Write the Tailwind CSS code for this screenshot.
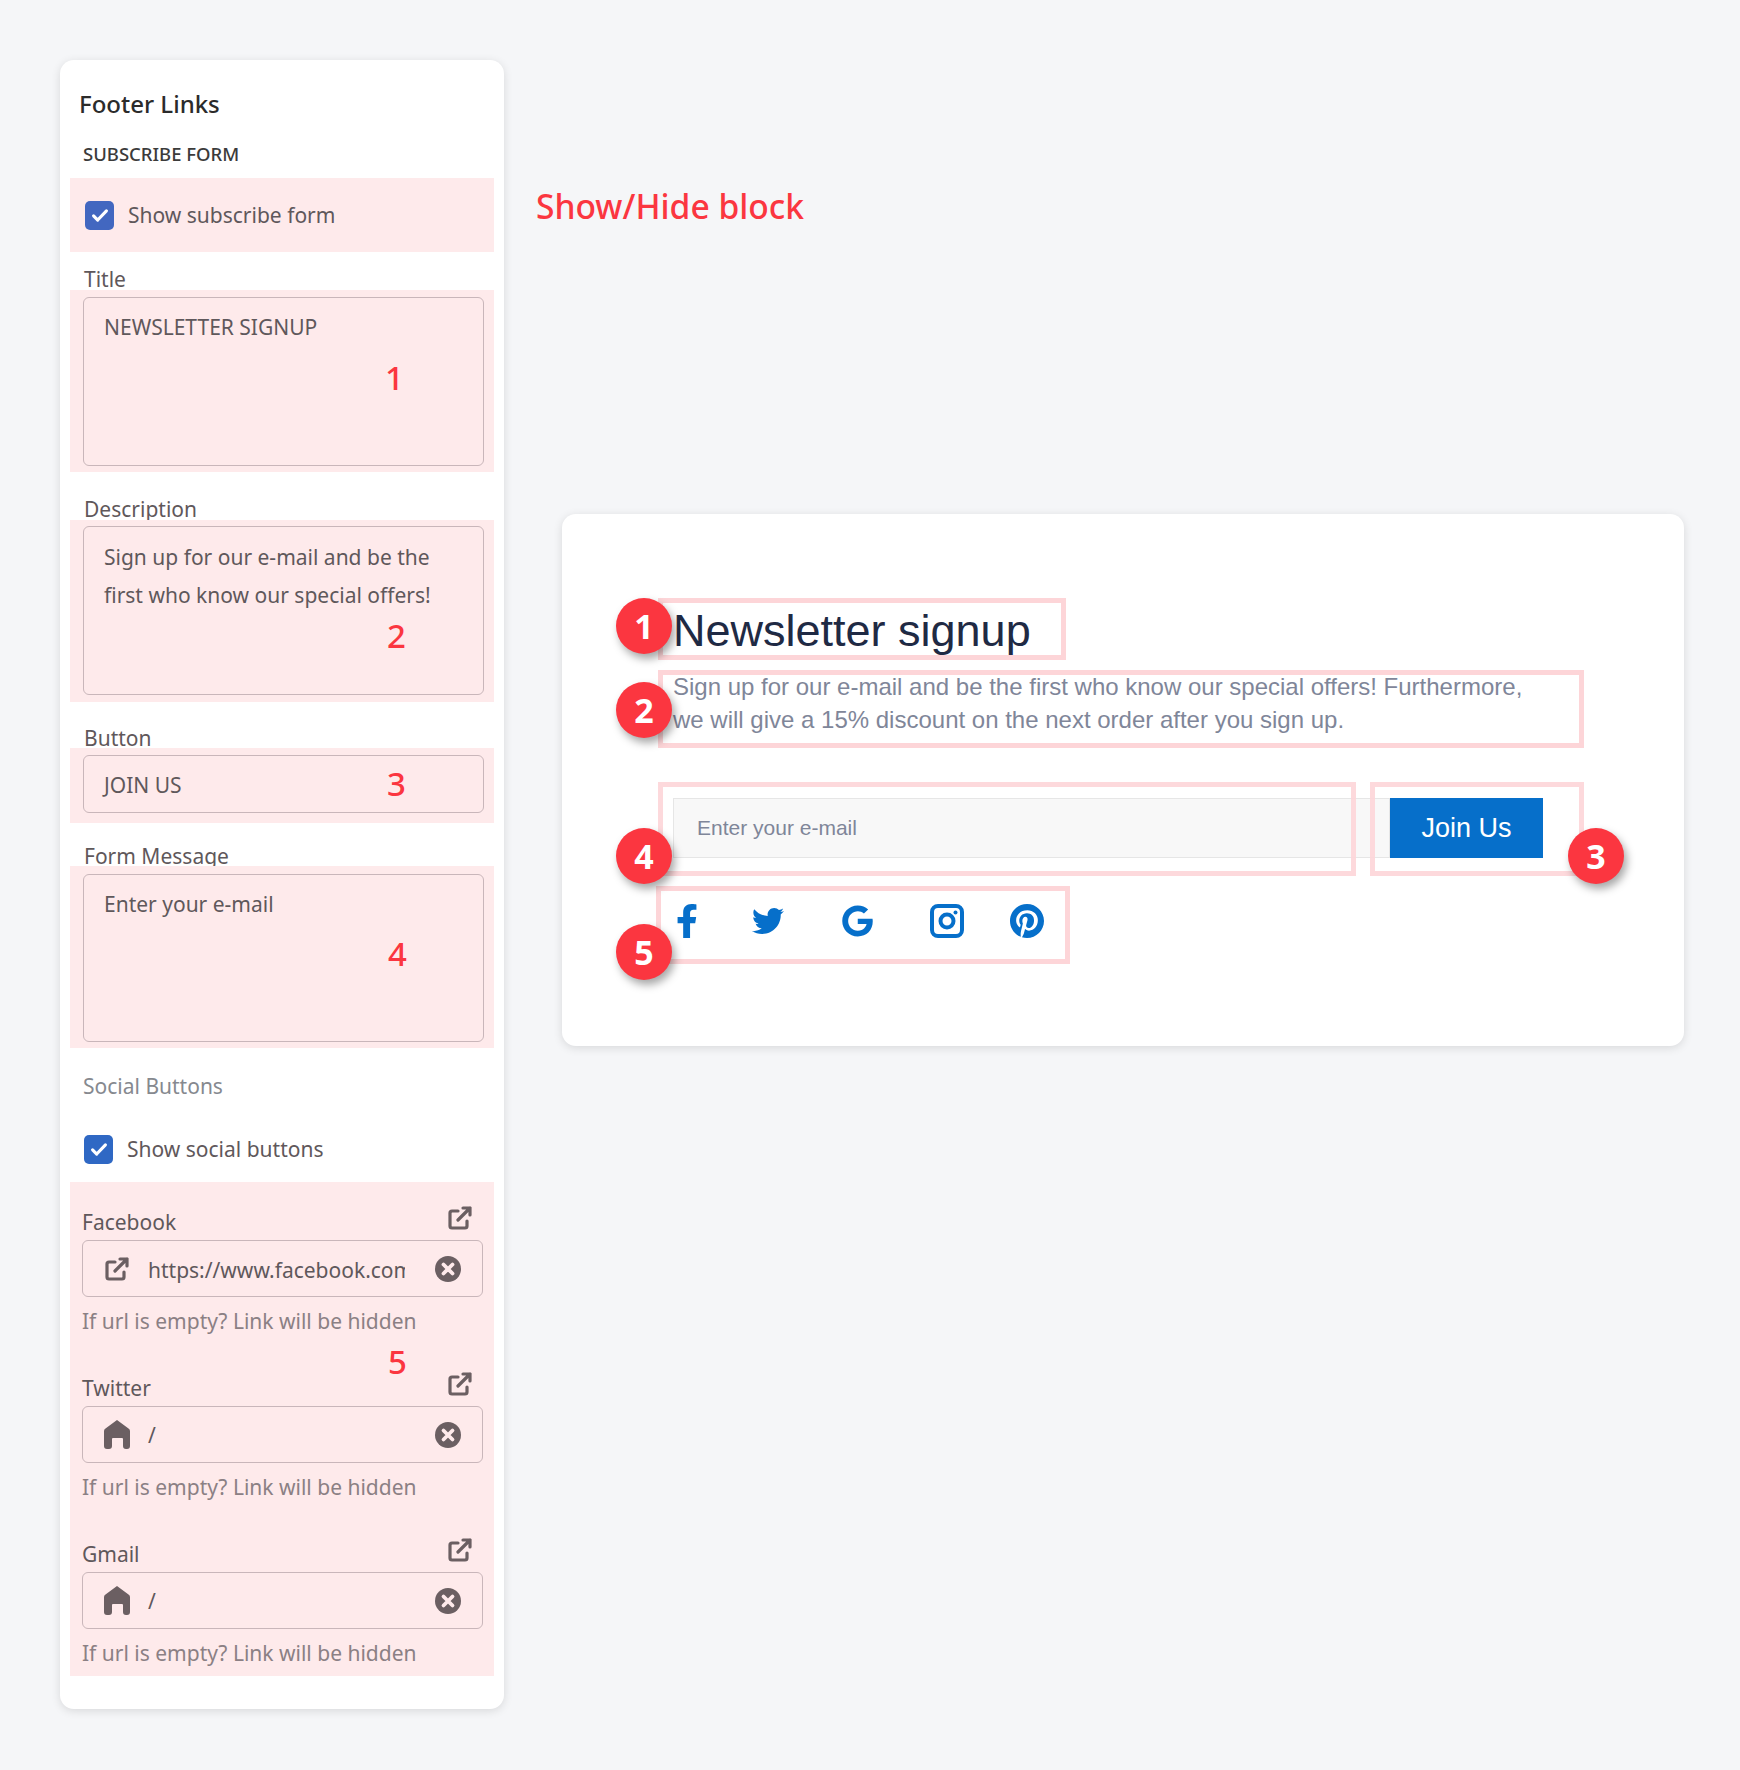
<!DOCTYPE html>
<html>
  <head>
    <meta charset="UTF-8" />
    <title>Footer Links</title>
    <script src="https://cdn.jsdelivr.net/npm/@tailwindcss/browser@4"></script>
  </head>
  <body class="bg-[#f5f6f8] font-['Noto_Sans',sans-serif]">
    <div class="relative flex h-[1770px] w-[1740px] items-start pl-[60px] pt-[60px]">
      <!-- left settings panel -->
      <aside class="relative h-[1649px] w-[444px] rounded-[14px] bg-white pt-[26px] text-[21px] leading-[28px] text-[#5f585b] shadow-[0_2px_10px_rgba(0,0,0,0.12)]">
        <h2 class="ml-[19px] h-[36px] text-[24px] leading-[36px] font-medium text-[#2b2b2b]">Footer Links</h2>
        <h3 class="ml-[23px] mt-[19px] h-[26px] text-[18.5px] leading-[26px] font-medium text-[#3b3b3b]">SUBSCRIBE FORM</h3>

        <div class="mx-[10px] mt-[11px] flex h-[74px] items-center gap-[14px] bg-[#feeaeb] pl-[15px]">
          <span class="flex h-[29px] w-[29px] items-center justify-center rounded-[5px] bg-[#4267c0]">
            <svg class="h-[22px] w-[22px]" viewBox="0 0 24 24" fill="none" stroke="white" stroke-width="3.4" stroke-linecap="round" stroke-linejoin="round"><path d="M5 13l4.5 4.5L19 7.5" /></svg>
          </span>
          <span>Show subscribe form</span>
        </div>

        <div class="ml-[24px] mt-[14px] h-[24px] leading-[26px]">Title</div>
        <div class="relative mx-[10px] h-[182px] bg-[#feeaeb] px-[13px] pt-[7px]">
          <div class="h-[169px] w-[401px] rounded-[6px] border border-[#c9b6ba] px-[20px] py-[14px] leading-[30px]">NEWSLETTER SIGNUP</div>
          <span class="absolute left-[315px] top-[66px] text-[33px] leading-[44px] font-medium text-[#fb3640]">1</span>
        </div>

        <div class="ml-[24px] mt-[25px] h-[23px] leading-[25px]">Description</div>
        <div class="relative mx-[10px] h-[182px] bg-[#feeaeb] px-[13px] pt-[6px]">
          <div class="h-[169px] w-[401px] rounded-[6px] border border-[#c9b6ba] px-[20px] py-[11px] leading-[38px]">Sign up for our e-mail and be the first who know our special offers!</div>
          <span class="absolute left-[317px] top-[94px] text-[33px] leading-[44px] font-medium text-[#fb3640]">2</span>
        </div>

        <div class="ml-[24px] mt-[24px] h-[22px] leading-[24px]">Button</div>
        <div class="relative mx-[10px] h-[75px] bg-[#feeaeb] px-[13px] pt-[7px]">
          <div class="flex h-[58px] w-[401px] items-center rounded-[6px] border border-[#c9b6ba] px-[20px] pt-[2px]">JOIN US</div>
          <span class="absolute left-[317px] top-[14px] text-[33px] leading-[44px] font-medium text-[#fb3640]">3</span>
        </div>

        <div class="ml-[24px] mt-[22px] h-[21px] leading-[23px]">Form Message</div>
        <div class="relative mx-[10px] h-[182px] bg-[#feeaeb] px-[13px] pt-[8px]">
          <div class="h-[168px] w-[401px] rounded-[6px] border border-[#c9b6ba] px-[20px] py-[14px] leading-[30px]">Enter your e-mail</div>
          <span class="absolute left-[318px] top-[66px] text-[33px] leading-[44px] font-medium text-[#fb3640]">4</span>
        </div>

        <div class="ml-[23px] mt-[24px] h-[28px] text-[#86898f]">Social Buttons</div>
        <div class="ml-[24px] mt-[34px] flex h-[30px] items-center gap-[14px]">
          <span class="flex h-[29px] w-[29px] items-center justify-center rounded-[5px] bg-[#2f68c4]">
            <svg class="h-[22px] w-[22px]" viewBox="0 0 24 24" fill="none" stroke="white" stroke-width="3.4" stroke-linecap="round" stroke-linejoin="round"><path d="M5 13l4.5 4.5L19 7.5" /></svg>
          </span>
          <span>Show social buttons</span>
        </div>

        <div class="relative mx-[10px] mt-[18px] h-[494px] bg-[#feeaeb] px-[12px] pt-[24px]">
          <div class="flex h-[34px] items-start justify-between pr-[10px]">
            <span class="mt-[2px]">Facebook</span>
            <svg class="h-[24px] w-[24px] text-[#6b5f62]" viewBox="0 0 24 24" fill="none" stroke="currentColor" stroke-width="3.2" stroke-linecap="round" stroke-linejoin="round"><path d="M10 5H4a2 2 0 0 0-2 2v13a2 2 0 0 0 2 2h13a2 2 0 0 0 2-2v-5M10 14 22 2M15 2h7v7" /></svg>
          </div>
          <div class="flex h-[57px] w-[401px] items-center rounded-[6px] border border-[#c9b6ba] pl-[22px] pr-[21px]">
            <svg class="h-[24px] w-[24px] shrink-0 text-[#6b5f62]" viewBox="0 0 24 24" fill="none" stroke="currentColor" stroke-width="3.2" stroke-linecap="round" stroke-linejoin="round"><path d="M10 5H4a2 2 0 0 0-2 2v13a2 2 0 0 0 2 2h13a2 2 0 0 0 2-2v-5M10 14 22 2M15 2h7v7" /></svg>
            <span class="ml-[19px] w-[257px] overflow-hidden whitespace-nowrap pt-[2px]">https://www.facebook.com</span>
            <svg class="ml-auto h-[26px] w-[26px] shrink-0" viewBox="0 0 26 26"><circle cx="13" cy="13" r="13" fill="#6b5f62" /><path d="M8.5 8.5l9 9M17.5 8.5l-9 9" stroke="#feeaeb" stroke-width="3.8" stroke-linecap="round" /></svg>
          </div>
          <div class="mt-[10px] h-[28px] text-[#8b8084]">If url is empty? Link will be hidden</div>

          <div class="mt-[37px] flex h-[34px] items-start justify-between pr-[10px]">
            <span class="mt-[2px]">Twitter</span>
            <svg class="h-[24px] w-[24px] text-[#6b5f62]" viewBox="0 0 24 24" fill="none" stroke="currentColor" stroke-width="3.2" stroke-linecap="round" stroke-linejoin="round"><path d="M10 5H4a2 2 0 0 0-2 2v13a2 2 0 0 0 2 2h13a2 2 0 0 0 2-2v-5M10 14 22 2M15 2h7v7" /></svg>
          </div>
          <div class="flex h-[57px] w-[401px] items-center rounded-[6px] border border-[#c9b6ba] pl-[21px] pr-[21px]">
            <svg class="h-[29px] w-[26px] shrink-0 text-[#6b5f62]" viewBox="0 0 26 29" fill="currentColor"><path d="M13 0 24.5 8.5A3 3 0 0 1 26 11v15a3 3 0 0 1-3 3h-1a3 3 0 0 1-3-3v-7a1 1 0 0 0-1-1H9a1 1 0 0 0-1 1v7a3 3 0 0 1-3 3H3a3 3 0 0 1-3-3V11a3 3 0 0 1 1.5-2.5z" /></svg>
            <span class="ml-[18px]">/</span>
            <svg class="ml-auto h-[26px] w-[26px] shrink-0" viewBox="0 0 26 26"><circle cx="13" cy="13" r="13" fill="#6b5f62" /><path d="M8.5 8.5l9 9M17.5 8.5l-9 9" stroke="#feeaeb" stroke-width="3.8" stroke-linecap="round" /></svg>
          </div>
          <div class="mt-[10px] h-[28px] text-[#8b8084]">If url is empty? Link will be hidden</div>

          <div class="mt-[37px] flex h-[34px] items-start justify-between pr-[10px]">
            <span class="mt-[2px]">Gmail</span>
            <svg class="h-[24px] w-[24px] text-[#6b5f62]" viewBox="0 0 24 24" fill="none" stroke="currentColor" stroke-width="3.2" stroke-linecap="round" stroke-linejoin="round"><path d="M10 5H4a2 2 0 0 0-2 2v13a2 2 0 0 0 2 2h13a2 2 0 0 0 2-2v-5M10 14 22 2M15 2h7v7" /></svg>
          </div>
          <div class="flex h-[57px] w-[401px] items-center rounded-[6px] border border-[#c9b6ba] pl-[21px] pr-[21px]">
            <svg class="h-[29px] w-[26px] shrink-0 text-[#6b5f62]" viewBox="0 0 26 29" fill="currentColor"><path d="M13 0 24.5 8.5A3 3 0 0 1 26 11v15a3 3 0 0 1-3 3h-1a3 3 0 0 1-3-3v-7a1 1 0 0 0-1-1H9a1 1 0 0 0-1 1v7a3 3 0 0 1-3 3H3a3 3 0 0 1-3-3V11a3 3 0 0 1 1.5-2.5z" /></svg>
            <span class="ml-[18px]">/</span>
            <svg class="ml-auto h-[26px] w-[26px] shrink-0" viewBox="0 0 26 26"><circle cx="13" cy="13" r="13" fill="#6b5f62" /><path d="M8.5 8.5l9 9M17.5 8.5l-9 9" stroke="#feeaeb" stroke-width="3.8" stroke-linecap="round" /></svg>
          </div>
          <div class="mt-[10px] h-[28px] text-[#8b8084]">If url is empty? Link will be hidden</div>

          <span class="absolute left-[318px] top-[158px] text-[33px] leading-[44px] font-medium text-[#fb3640]">5</span>
        </div>
      </aside>

      <!-- right side -->
      <main class="ml-[32px] flex flex-col items-start">
        <div class="mt-[124px] h-[44px] text-[33.6px] leading-[44px] font-medium text-[#fb3640]">Show/Hide block</div>

        <section class="relative ml-[26px] mt-[286px] h-[532px] w-[1122px] rounded-[14px] bg-white pl-[111px] pt-[92px] font-['Liberation_Sans',sans-serif] shadow-[0_2px_10px_rgba(0,0,0,0.12)]">
          <h1 class="h-[50px] text-[45px] leading-[50px] text-[#1f2a44]">Newsletter signup</h1>
          <p class="mt-[14px] w-[860px] text-[24px] leading-[33px] text-[#7f8699]">Sign up for our e-mail and be the first who know our special offers! Furthermore, we will give a 15% discount on the next order after you sign up.</p>

          <div class="mt-[62px] flex h-[60px] w-[870px]">
            <div class="flex h-full w-[717px] items-center border border-[#e6e6e6] bg-[#f8f8f8] pl-[23px] text-[21px] text-[#7f8699]">Enter your e-mail</div>
            <button class="h-full w-[153px] bg-[#066fca] text-[27px] text-white">Join Us</button>
          </div>

          <div class="mt-[46px] flex h-[34px] items-center">
            <svg class="ml-[3px] h-[34px] w-[22px] text-[#066fca]" viewBox="0 0 320 512" preserveAspectRatio="none" fill="currentColor"><path d="M279.14 288l14.22-92.66h-88.91v-60.13c0-25.35 12.42-50.06 52.24-50.06h40.42V6.26S260.43 0 225.36 0c-73.22 0-121.08 44.38-121.08 124.72v70.62H22.89V288h81.39v224h100.17V288z" /></svg>
            <svg class="ml-[53px] h-[32px] w-[34px] text-[#066fca]" viewBox="0 0 512 512" fill="currentColor"><path d="M459.37 151.716c.325 4.548.325 9.097.325 13.645 0 138.72-105.583 298.558-298.558 298.558-59.452 0-114.68-17.219-161.137-47.106 8.447.974 16.568 1.299 25.34 1.299 49.055 0 94.213-16.568 130.274-44.832-46.132-.975-84.792-31.188-98.112-72.772 6.498.974 12.995 1.624 19.818 1.624 9.421 0 18.843-1.3 27.614-3.573-48.081-9.747-84.143-51.98-84.143-102.985v-1.299c13.969 7.797 30.214 12.67 47.431 13.319-28.264-18.843-46.781-51.005-46.781-87.391 0-19.492 5.197-37.36 14.294-52.954 51.655 63.675 129.3 105.258 216.365 109.807-1.624-7.797-2.599-15.918-2.599-24.04 0-57.828 46.782-104.934 104.934-104.934 30.213 0 57.502 12.67 76.67 33.137 23.715-4.548 46.456-13.32 66.599-25.34-7.798 24.366-24.366 44.833-46.132 57.827 21.117-2.273 41.584-8.122 60.426-16.243-14.292 20.791-32.161 39.308-52.628 54.253z" /></svg>
            <svg class="ml-[57px] h-[32px] w-[31px] text-[#066fca]" viewBox="0 0 488 512" fill="currentColor"><path d="M488 261.8C488 403.3 391.1 504 248 504 110.8 504 0 393.2 0 256S110.8 8 248 8c66.8 0 123 24.5 166.3 64.9l-67.5 64.9C258.5 52.6 94.3 116.6 94.3 256c0 86.5 69.1 156.6 153.7 156.6 98.2 0 135-70.4 140.8-106.9H248v-85.3h236.1c2.3 12.7 3.9 24.9 3.9 41.4z" /></svg>
            <svg class="ml-[57px] h-[34px] w-[34px] text-[#066fca]" viewBox="0 0 34 34" fill="none" stroke="currentColor"><rect x="2" y="2" width="30" height="30" rx="6" stroke-width="4" /><circle cx="17" cy="17" r="6.5" stroke-width="4" /><circle cx="25.5" cy="8.5" r="2" fill="currentColor" stroke="none" /></svg>
            <svg class="ml-[46px] h-[34px] w-[34px] text-[#066fca]" viewBox="0 8 496 496" fill="currentColor"><path d="M496 256c0 137-111 248-248 248-25.6 0-50.2-3.9-73.4-11.1 10.1-16.5 25.2-43.5 30.8-65 3-11.6 15.4-59 15.4-59 8.1 15.4 31.7 28.5 56.8 28.5 74.8 0 128.7-68.8 128.7-154.3 0-81.9-66.9-143.2-152.9-143.2-107 0-163.9 71.8-163.9 150.1 0 36.4 19.4 81.7 50.3 96.1 4.7 2.2 7.2 1.2 8.3-3.3.8-3.4 5-20.3 6.9-28.1.6-2.5.3-4.7-1.7-7.1-10.1-12.5-18.3-35.3-18.3-56.6 0-54.7 41.4-107.6 112-107.6 60.9 0 103.6 41.5 103.6 100.9 0 67.1-33.9 113.6-78 113.6-24.3 0-42.6-20.1-36.7-44.8 7-29.5 20.5-61.3 20.5-82.6 0-19-10.2-34.9-31.4-34.9-24.9 0-44.9 25.7-44.9 60.2 0 22 7.4 36.8 7.4 36.8s-24.5 103.8-29 123.2c-5 21.4-3 51.6-.9 71.2C65.4 450.9 0 361.1 0 256 0 119 111 8 248 8s248 111 248 248z" /></svg>
          </div>

          <!-- annotation outlines -->
          <div class="absolute left-[96px] top-[84px] h-[62px] w-[408px] border-[5px] border-[#fdd5d8]"></div>
          <div class="absolute left-[96px] top-[156px] h-[78px] w-[926px] border-[5px] border-[#fdd5d8]"></div>
          <div class="absolute left-[96px] top-[268px] h-[94px] w-[698px] border-[5px] border-[#fdd5d8]/90"></div>
          <div class="absolute left-[808px] top-[268px] h-[94px] w-[214px] border-[5px] border-[#fdd5d8]/90"></div>
          <div class="absolute left-[94px] top-[372px] h-[78px] w-[414px] border-[5px] border-[#fdd5d8]"></div>

          <!-- numbered badges -->
          <span class="absolute left-[54px] top-[84px] flex h-[56px] w-[56px] items-center justify-center rounded-full bg-[#fb3640] font-['Open_Sans',sans-serif] text-[34px] font-bold text-white shadow-[3px_5px_8px_rgba(0,0,0,0.35)]">1</span>
          <span class="absolute left-[54px] top-[168px] flex h-[56px] w-[56px] items-center justify-center rounded-full bg-[#fb3640] font-['Open_Sans',sans-serif] text-[34px] font-bold text-white shadow-[3px_5px_8px_rgba(0,0,0,0.35)]">2</span>
          <span class="absolute left-[1006px] top-[314px] flex h-[56px] w-[56px] items-center justify-center rounded-full bg-[#fb3640] font-['Open_Sans',sans-serif] text-[34px] font-bold text-white shadow-[3px_5px_8px_rgba(0,0,0,0.35)]">3</span>
          <span class="absolute left-[54px] top-[314px] flex h-[56px] w-[56px] items-center justify-center rounded-full bg-[#fb3640] font-['Open_Sans',sans-serif] text-[34px] font-bold text-white shadow-[3px_5px_8px_rgba(0,0,0,0.35)]">4</span>
          <span class="absolute left-[54px] top-[410px] flex h-[56px] w-[56px] items-center justify-center rounded-full bg-[#fb3640] font-['Open_Sans',sans-serif] text-[34px] font-bold text-white shadow-[3px_5px_8px_rgba(0,0,0,0.35)]">5</span>
        </section>
      </main>
    </div>
  </body>
</html>
